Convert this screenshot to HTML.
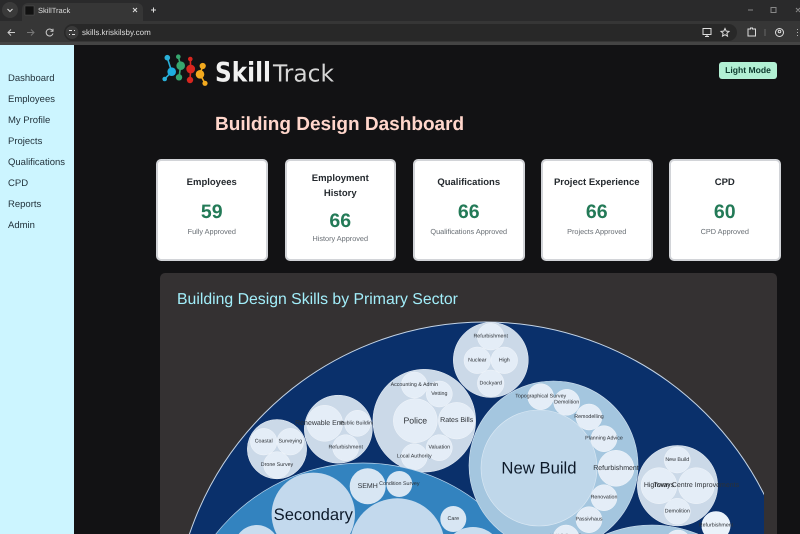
<!DOCTYPE html>
<html><head><meta charset="utf-8"><title>SkillTrack</title>
<style>
html,body{margin:0;padding:0;width:800px;height:534px;overflow:hidden;background:#121214;font-family:"Liberation Sans",sans-serif;text-rendering:geometricPrecision}
#wrap{position:absolute;left:0;top:0;width:800px;height:534px;overflow:hidden}
.a{position:absolute}
#strip{left:0;top:0;width:800px;height:21px;background:#2a2a2b}
#tool{left:0;top:21px;width:800px;height:21px;background:#363636}
#sep{left:0;top:42px;width:800px;height:3px;background:#444}
#tab{left:22px;top:3px;width:121px;height:18px;background:#363636;border-radius:6px 6px 0 0}
#pill{left:64px;top:23.5px;width:673px;height:17.5px;background:#282828;border-radius:9px}
#side{left:0;top:45px;width:74px;height:489px;background:#ccf5ff}
.nav{left:8px;font-size:9.5px;line-height:12px;color:#1f2f38;white-space:nowrap}
.card{top:159px;width:107.5px;height:97.5px;background:#fff;border:2px solid #d2d4d8;border-radius:5px;text-align:center}
.card .t{position:absolute;left:0;right:0;font-weight:bold;font-size:9.5px;line-height:15px;color:#24292e}
.card .n{position:absolute;left:0;right:0;font-weight:bold;font-size:19.5px;line-height:22px;color:#237a57}
.card .s{position:absolute;left:0;right:0;font-size:7.3px;line-height:10px;color:#666c72}
#h1{left:215px;top:112.5px;font-size:19px;line-height:24px;font-weight:bold;color:#ffd6cb;white-space:nowrap}
#btn{left:719px;top:62px;width:58px;height:17px;background:#b2f0d4;border-radius:3px;font-size:8.6px;font-weight:bold;line-height:17px;text-align:center;color:#0d3b2e}
#panel{left:160px;top:273px;width:617px;height:261px;background:#343132;border-radius:5px 5px 0 0}
#ptitle{left:177px;top:290px;font-size:15.8px;line-height:20px;color:#a2eefa;white-space:nowrap}
svg{position:absolute;left:0;top:0}
</style></head><body><div id="wrap">
<div class="a" id="strip"></div><div class="a" id="tool"></div><div class="a" id="sep"></div>
<div class="a" id="tab"></div><div class="a" id="pill"></div>
<div class="a" style="left:38px;top:5px;font-size:7.5px;line-height:11px;color:#ddd">SkillTrack</div>
<div class="a" style="left:82px;top:27px;font-size:8px;line-height:11px;color:#ddd">skills.kriskilsby.com</div>

<svg width="800" height="45" viewBox="0 0 800 45" fill="none" stroke="#ccc" stroke-width="1">
<circle cx="10" cy="10" r="8" fill="#3a3a3a" stroke="none"/>
<path d="M7.5 9l2.5 2.5 2.5-2.5" stroke="#ddd"/>
<rect x="25" y="6" width="9" height="9" fill="#111" stroke="#555" stroke-width=".5"/>
<path d="M133 8l4 4M137 8l-4 4" stroke="#ddd"/>
<path d="M153.500 7.500v5M151 10h5" stroke="#ddd"/>
<path d="M748 10h5M771 7.500h5v5h-5zM796 8l4 4M800 8l-4 4" stroke="#888"/>
<path d="M15 32.500H8M11 29.500l-3 3 3 3" stroke="#ccc"/>
<path d="M27 32.500h7M31 29.500l3 3-3 3" stroke="#777"/>
<path d="M52.500 30.500a3.500 3.500 0 1 0 .5 3M53 28.800v2.500h-2.500" stroke="#ccc"/>
<circle cx="72" cy="32.500" r="6.500" fill="#3a3a3a" stroke="none"/>
<path d="M69 30.500h3M74 30.500h1M69 34.500h1M72 34.500h3" stroke="#ddd"/>
<path d="M703 28.500h8v6h-8zM707 34.500v2M705 36.500h4" stroke="#ddd"/>
<path d="M725 28.500l1.200 2.600 2.800.3-2.100 1.900.6 2.800-2.500-1.400-2.500 1.400.6-2.800-2.100-1.900 2.800-.3z" stroke="#ddd"/>
<path d="M748 29h2.500v-1h2v1h3v7h-7.500z" stroke="#ddd"/>
<path d="M765 29v7" stroke="#666"/>
<circle cx="779.500" cy="32.500" r="4" stroke="#ddd"/><circle cx="779.500" cy="31.500" r="1.300" stroke="#ddd"/>
<path d="M797.500 29v.8M797.500 32v.8M797.500 35v.8" stroke="#ddd"/>
</svg>

<div class="a" id="side"></div>
<div class="a nav" style="top:73px">Dashboard</div>
<div class="a nav" style="top:94px">Employees</div>
<div class="a nav" style="top:115px">My Profile</div>
<div class="a nav" style="top:136px">Projects</div>
<div class="a nav" style="top:157px">Qualifications</div>
<div class="a nav" style="top:178px">CPD</div>
<div class="a nav" style="top:199px">Reports</div>
<div class="a nav" style="top:220px">Admin</div>

<svg width="800" height="100" viewBox="0 0 800 100">
<g stroke-width="1.600" fill="none">
<path d="M167.300 57.700L171.700 71.700L164.700 79" stroke="#2ab0d8"/>
<path d="M178.300 56.700L180.700 65.700L179 77.300" stroke="#37a76f"/>
<path d="M190.300 59L190.700 69L190 80" stroke="#d8261f"/>
<path d="M202.700 66L200 74.300L205 83.300" stroke="#f2a91e"/>
</g>
<circle cx="167.300" cy="57.700" r="2.800" fill="#2ab0d8"/><circle cx="171.700" cy="71.700" r="4.300" fill="#1eaee0"/><circle cx="164.700" cy="79" r="2.300" fill="#2ab0d8"/>
<circle cx="178.300" cy="56.700" r="2.300" fill="#37a76f"/><circle cx="180.700" cy="65.700" r="4.300" fill="#37a76f"/><circle cx="179" cy="77.300" r="3.200" fill="#37a76f"/>
<circle cx="190.300" cy="59" r="2.300" fill="#d8261f"/><circle cx="190.700" cy="69" r="4.400" fill="#d8261f"/><circle cx="190" cy="80" r="3.200" fill="#d8261f"/>
<circle cx="202.700" cy="66" r="3.100" fill="#f2a91e"/><circle cx="200" cy="74.300" r="4.300" fill="#f2a91e"/><circle cx="205" cy="83.300" r="2.600" fill="#f2a91e"/>
<text x="215" y="81.500" font-family="DejaVu Sans" font-weight="bold" font-size="27" fill="#f1f1f1" textLength="56" lengthAdjust="spacingAndGlyphs">Skill</text>
<text x="273" y="81.500" font-family="DejaVu Sans" font-size="23.500" fill="#d6d6d6" textLength="61" lengthAdjust="spacingAndGlyphs">Track</text>
</svg>

<div class="a" id="btn">Light Mode</div>
<div class="a" id="h1">Building Design Dashboard</div>

<div class="a card" style="left:156px"><div class="t" style="top:14px">Employees</div><div class="n" style="top:40px">59</div><div class="s" style="top:66px">Fully Approved</div></div>
<div class="a card" style="left:284.500px"><div class="t" style="top:10px">Employment<br>History</div><div class="n" style="top:49px">66</div><div class="s" style="top:73px">History Approved</div></div>
<div class="a card" style="left:413px"><div class="t" style="top:14px">Qualifications</div><div class="n" style="top:40px">66</div><div class="s" style="top:66px">Qualifications Approved</div></div>
<div class="a card" style="left:541px"><div class="t" style="top:14px">Project Experience</div><div class="n" style="top:40px">66</div><div class="s" style="top:66px">Projects Approved</div></div>
<div class="a card" style="left:669px"><div class="t" style="top:14px">CPD</div><div class="n" style="top:40px">60</div><div class="s" style="top:66px">CPD Approved</div></div>

<div class="a" id="panel"></div>
<div class="a" id="ptitle">Building Design Skills by Primary Sector</div>

<svg width="800" height="534" viewBox="0 0 800 534" font-family="Liberation Sans" text-anchor="middle">
<defs><clipPath id="c"><rect x="160" y="300" width="604" height="234"/></clipPath></defs>
<style>
.p{fill:#cbd9e8;stroke:#eef3f9;stroke-width:.5}
.k{fill:#e4edf7;stroke:#f2f6fb;stroke-width:.5}
.x{fill:#2d3136;font-size:5.300px}
.y{fill:#2d3136;font-size:7px}
.z{fill:#0d1a2a}
</style>
<g clip-path="url(#c)" dominant-baseline="central">
<circle cx="485" cy="634" r="312" fill="#0a306b" stroke="#c4d4e6" stroke-width="1"/>

<circle cx="277" cy="449.200" r="29.700" class="p"/>
<circle cx="263.700" cy="441.700" r="13.300" class="k"/><text x="263.700" y="441.700" class="x">Coastal</text>
<circle cx="290.300" cy="441.700" r="13.300" class="k"/><text x="290.300" y="441.700" class="x">Surveying</text>
<circle cx="277" cy="465" r="13.300" class="k"/><text x="277" y="465" class="x">Drone Survey</text>

<circle cx="338.300" cy="429.200" r="34" class="p"/>
<circle cx="324.700" cy="423.300" r="18" class="k"/><text x="324.700" y="423.300" class="y">Renewable Energy</text>
<circle cx="357.500" cy="423.300" r="13" class="k"/><text x="357.500" y="423.300" class="x">Public Building</text>
<circle cx="345.700" cy="447.700" r="13" class="k"/><text x="345.700" y="447.700" class="x">Refurbishment</text>

<circle cx="424.300" cy="420.700" r="51.400" class="p"/>
<circle cx="414.300" cy="385" r="13" class="k"/>
<circle cx="439.300" cy="394" r="13" class="k"/><text x="439.300" y="394" class="x">Vetting</text>
<text x="414.300" y="385" class="x">Accounting &amp; Admin</text>
<circle cx="415.300" cy="420.700" r="22" class="k"/><text x="415.300" y="420.700" fill="#2d3136" font-size="8.700">Police</text>
<circle cx="456.700" cy="420.700" r="18.300" class="k"/><text x="456.700" y="420.700" class="y">Rates Bills</text>
<circle cx="439.300" cy="447.700" r="13" class="k"/><text x="439.300" y="447.700" class="x">Valuation</text>
<circle cx="414.300" cy="456.700" r="13" class="k"/><text x="414.300" y="456.700" class="x">Local Authority</text>

<circle cx="490.800" cy="360" r="37.500" class="p"/>
<circle cx="490.700" cy="336.700" r="13.300" class="k"/><text x="490.700" y="336.700" class="x">Refurbishment</text>
<circle cx="477.300" cy="360.300" r="13.300" class="k"/><text x="477.300" y="360.300" class="x">Nuclear</text>
<circle cx="504.300" cy="360.300" r="13.300" class="k"/><text x="504.300" y="360.300" class="x">High</text>
<circle cx="490.700" cy="383.300" r="13.300" class="k"/><text x="490.700" y="383.300" class="x">Dockyard</text>

<circle cx="363" cy="651" r="188" fill="#3383bf" stroke="#bcd6ec" stroke-width=".7"/>
<circle cx="313.300" cy="514.300" r="41.700" fill="#c3d9ed"/><text x="313.300" y="514.300" class="z" font-size="16.600">Secondary</text>
<circle cx="367.700" cy="486.300" r="18" fill="#d8e6f3"/><text x="367.700" y="486.300" class="y">SEMH</text>
<circle cx="399.300" cy="484" r="13" fill="#d8e6f3"/><text x="399.300" y="484" class="x">Condition Survey</text>
<circle cx="397.300" cy="545.700" r="47.400" fill="#c3d9ed"/>
<circle cx="453.300" cy="519" r="13" fill="#d8e6f3"/><text x="453.300" y="519" class="x">Care</text>
<circle cx="256.700" cy="547.500" r="22.500" fill="#c9ddef"/>
<circle cx="473" cy="557" r="30" fill="#c9ddef"/>

<circle cx="553.500" cy="465.500" r="84.500" fill="#a4c6df" stroke="#cfe0ef" stroke-width=".6"/>
<circle cx="539" cy="468" r="58" fill="#bfd7ea" stroke="#dce9f4" stroke-width=".6"/><text x="539" y="468" class="z" font-size="16.700">New Build</text>
<circle cx="540.700" cy="396.700" r="13" class="k"/>
<circle cx="566.700" cy="402.300" r="13" class="k"/>
<text x="540.700" y="396.700" class="x">Topographical Survey</text>
<text x="566.700" y="402.300" class="x">Demolition</text>
<circle cx="589" cy="417" r="13" class="k"/><text x="589" y="417" class="x">Remodelling</text>
<circle cx="604" cy="438.700" r="13" class="k"/><text x="604" y="438.700" class="x">Planning Advice</text>
<circle cx="616" cy="468.300" r="18" class="k"/><text x="616" y="468.300" class="y">Refurbishment</text>
<circle cx="604" cy="497.700" r="13" class="k"/><text x="604" y="497.700" class="x">Renovation</text>
<circle cx="589" cy="519.700" r="13" class="k"/><text x="589" y="519.700" class="x">Passivhaus</text>
<circle cx="566" cy="538" r="13" class="k"/><text x="566" y="536.500" class="x">HVAC Retrofit</text>

<circle cx="677.500" cy="485.700" r="40.200" class="p"/>
<circle cx="677.300" cy="460" r="13" class="k"/><text x="677.300" y="460" class="x">New Build</text>
<circle cx="659" cy="485.700" r="18" class="k"/><text x="659" y="485.700" class="y">Highways</text>
<circle cx="696.300" cy="485.700" r="18" class="k"/><text x="696.300" y="485.700" class="y">Town Centre Improvements</text>
<circle cx="677.300" cy="511.300" r="13" class="k"/><text x="677.300" y="511.300" class="x">Demolition</text>

<circle cx="652" cy="645" r="120" fill="#a4c6df" stroke="#cfe0ef" stroke-width=".6"/>
<circle cx="678" cy="543" r="13" class="k"/>
<circle cx="716" cy="525.700" r="14.500" fill="#eaf2fa"/><text x="716" y="525.700" class="x">Refurbishment</text>
</g>
</svg>
</div></body></html>
